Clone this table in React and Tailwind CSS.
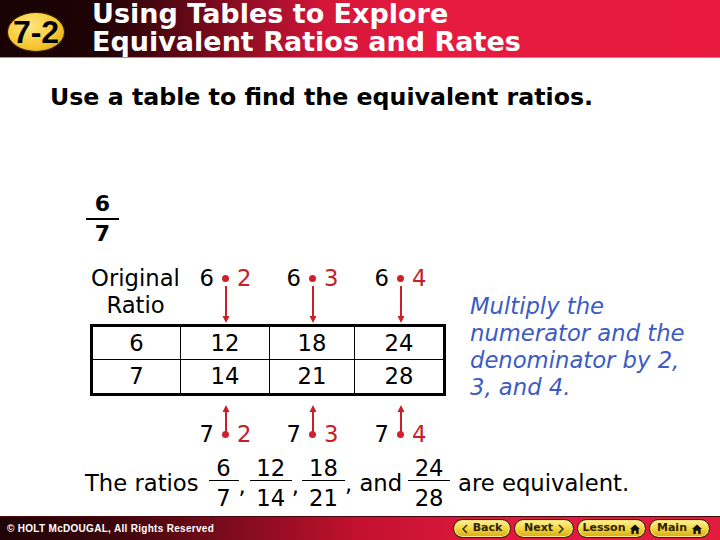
import React from "react";

const body = { fontFamily: '"DejaVu Sans", Verdana, sans-serif' };

function Dot() {
  return <span className="inline-block h-[7px] w-[7px] rounded-full bg-[#d0212b]" />;
}

function DownArrow() {
  return (
    <svg width="12" height="33" viewBox="0 0 12 33" className="-mt-[1px] overflow-visible">
      <line x1="6" y1="-5" x2="6" y2="26" stroke="#c8202b" strokeWidth="2" />
      <path d="M2.5 25 L9.5 25 L6 32 Z" fill="#c8202b" />
    </svg>
  );
}

function UpArrow() {
  return (
    <svg width="12" height="25" viewBox="0 0 12 25" className="overflow-visible">
      <path d="M2.5 16 L9.5 16 L6 9 Z" fill="#c8202b" />
      <line x1="6" y1="15" x2="6" y2="36" stroke="#c8202b" strokeWidth="2" />
    </svg>
  );
}

function Factor({ base, n }) {
  return (
    <div className="flex h-[27px] items-center gap-[8px] text-[22.7px] leading-[27px]">
      <span className="text-black">{base}</span>
      <Dot />
      <span className="text-[#c42029]">{n}</span>
    </div>
  );
}

function Frac({ top, bottom, className = "" }) {
  return (
    <div className={`flex flex-col items-center ${className}`}>
      <span className="leading-[24px]">{top}</span>
      <span className="h-[1px] w-full bg-black" />
      <span className="mt-[5px] leading-[24px]">{bottom}</span>
    </div>
  );
}

function NavButton({ children, className = "" }) {
  return (
    <div
      className={`flex h-[19px] items-center justify-center gap-[5px] rounded-full border-[1.5px] border-[#2e1a00] bg-gradient-to-b from-[#fff39a] via-[#f3d63c] to-[#d4aa12] text-[11px] font-bold text-[#2f2200] shadow-[inset_0_0_0_1px_#f9e77a] ${className}`}
      style={body}
    >
      {children}
    </div>
  );
}

function House() {
  return (
    <svg width="10" height="10" viewBox="0 0 10 10">
      <path d="M5 0.5 L10 5 L8.6 5 L8.6 10 L6.2 10 L6.2 6.8 L3.8 6.8 L3.8 10 L1.4 10 L1.4 5 L0 5 Z" fill="#111" />
    </svg>
  );
}

function Chevron({ dir }) {
  return (
    <svg width="6" height="10" viewBox="0 0 6 10">
      <polyline
        points={dir === "left" ? "5,1 1,5 5,9" : "1,1 5,5 1,9"}
        fill="none"
        stroke="#2f2200"
        strokeWidth="1.4"
      />
    </svg>
  );
}

export default function App() {
  const cols = [
    { base: "6", n: "2" },
    { base: "6", n: "3" },
    { base: "6", n: "4" },
  ];
  const lower = ["2", "3", "4"];

  return (
    <div className="flex h-[540px] w-[720px] flex-col overflow-hidden bg-white" style={body}>
      {/* Header */}
      <div className="flex h-[57px] items-start bg-[linear-gradient(to_right,#1a0204_0%,#1e0305_14%,#7a0a1c_30%,#d3163a_45%,#e71b3f_60%,#e81b3f_100%)]">
        <div className="ml-[7px] mt-[12px] flex h-[40px] w-[58px] items-center justify-center rounded-[50%] border-[1.5px] border-[#3a2400] bg-[radial-gradient(ellipse_at_40%_35%,#ffe680_0%,#f6c934_55%,#d79b12_100%)]">
          <span
            className="text-[32px] font-bold leading-none text-black"
            style={{ fontFamily: '"Liberation Sans", Arial, sans-serif' }}
          >
            7-2
          </span>
        </div>
        <div className="ml-[27px] text-[27px] font-bold leading-[28px] text-white">
          <div>Using Tables to Explore</div>
          <div>Equivalent Ratios and Rates</div>
        </div>
      </div>
      <div className="h-[1px] bg-[#9a9a9a]" />

      {/* Content */}
      <div className="flex flex-1 flex-col">
        <h1 className="ml-[50px] mt-[25px] text-[23.7px] font-bold leading-[28px] text-black">
          Use a table to find the equivalent ratios.
        </h1>

        <div className="ml-[86px] mt-[81px] flex w-[33px] flex-col items-center text-[22px] font-bold">
          <span className="leading-[24px]">6</span>
          <span className="mt-[2px] h-[2px] w-full bg-black" />
          <span className="mt-[2px] leading-[24px]">7</span>
        </div>

        <div className="mt-[19px] flex">
          <div className="ml-[90px] flex w-[356px] flex-col">
            <div className="grid grid-cols-[91px_89px_85px_91px]">
              <div className="text-center text-[22.7px] leading-[27px]">
                Original
                <br />
                Ratio
              </div>
              {cols.map((c) => (
                <div key={c.n} className="flex flex-col items-center">
                  <Factor base={c.base} n={c.n} />
                  <DownArrow />
                </div>
              ))}
            </div>

            <div className="grid grid-cols-[88px_89px_85px_88px] border-[3px] border-black text-[22.7px]">
              {["6", "12", "18", "24"].map((v, i) => (
                <div
                  key={v}
                  className={`flex h-[33px] items-center justify-center border-b border-black ${i < 3 ? "border-r" : ""}`}
                >
                  {v}
                </div>
              ))}
              {["7", "14", "21", "28"].map((v, i) => (
                <div
                  key={v}
                  className={`flex h-[33px] items-center justify-center border-black ${i < 3 ? "border-r" : ""}`}
                >
                  {v}
                </div>
              ))}
            </div>

            <div className="grid grid-cols-[91px_89px_85px_91px]">
              <div />
              {lower.map((n) => (
                <div key={n} className="flex flex-col items-center">
                  <UpArrow />
                  <Factor base="7" n={n} />
                </div>
              ))}
            </div>
          </div>

          <p className="ml-[24px] mt-[28px] text-[22.7px] italic leading-[27px] text-[#3b5bc6]">
            Multiply the
            <br />
            numerator and the
            <br />
            denominator by 2,
            <br />
            3, and 4.
          </p>
        </div>

        <div className="ml-[85px] mt-[8px] flex items-center text-[22.7px] leading-[27px] text-black">
          <span>The ratios</span>
          <Frac top="6" bottom="7" className="ml-[10px] w-[30px]" />
          <span className="pt-[4px]">,</span>
          <Frac top="12" bottom="14" className="ml-[4px] w-[42px]" />
          <span className="pt-[4px]">,</span>
          <Frac top="18" bottom="21" className="ml-[3px] w-[43px]" />
          <span>, and</span>
          <Frac top="24" bottom="28" className="ml-[6px] w-[42px]" />
          <span className="ml-[8px]">are equivalent.</span>
        </div>
      </div>

      {/* Footer */}
      <div className="flex h-[24px] items-center border-t border-[#4a080e] bg-[linear-gradient(to_right,#1f0406_0%,#3a060b_15%,#c4112f_50%,#e01a3e_70%,#e21b3f_100%)]">
        <span
          className="ml-[7px] text-[10px] font-bold tracking-[0.3px] text-white"
          style={{ fontFamily: '"Liberation Sans", Arial, sans-serif' }}
        >
          © HOLT McDOUGAL, All Rights Reserved
        </span>
        <div className="ml-auto mr-[10px] flex gap-[3px]">
          <NavButton className="w-[58px]">
            <Chevron dir="left" />
            <span>Back</span>
          </NavButton>
          <NavButton className="w-[60px]">
            <span>Next</span>
            <Chevron dir="right" />
          </NavButton>
          <NavButton className="w-[69px]">
            <span>Lesson</span>
            <House />
          </NavButton>
          <NavButton className="w-[61px]">
            <span>Main</span>
            <House />
          </NavButton>
        </div>
      </div>
    </div>
  );
}
